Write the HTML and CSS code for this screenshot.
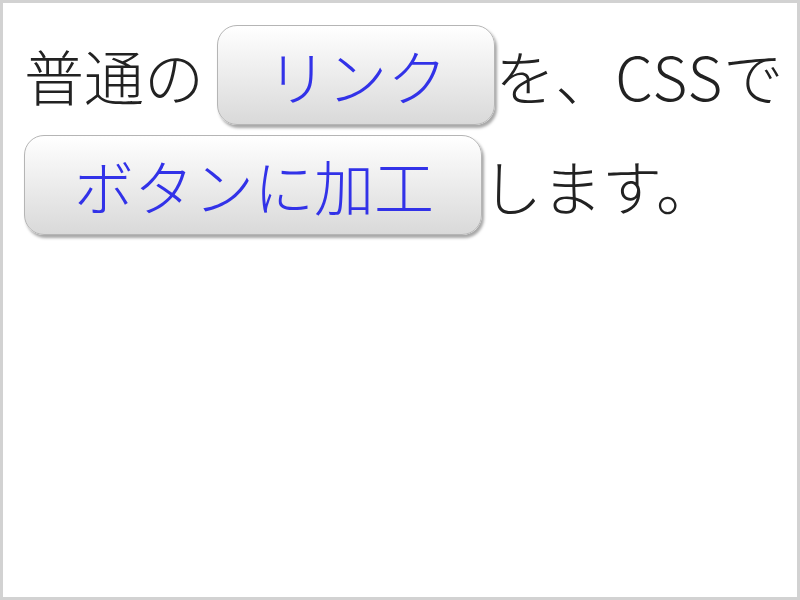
FILE: index.html
```html
<!DOCTYPE html>
<html lang="ja">
<head>
    <meta charset="UTF-8">
    <meta name="viewport" content="width=device-width, initial-scale=1.0">
    <title>リンクをボタンに</title>
    <link rel="stylesheet" href="styles.css">
</head>
<body>

    <div class="frame">
        <p class="sample">普通の <a href="#" class="btn">リンク</a>を、<span class="latin">CSS</span>で<a href="#" class="btn">ボタンに加工</a>します。</p>
    </div>

</body>
</html>
```

FILE: styles.css
```css
/* Plain page with a light grey frame */
body {
    margin: 0;
    padding: 0;
    background: #fff;
    font-family: "Noto Sans CJK JP", "Noto Sans", sans-serif;
}

.frame {
    box-sizing: border-box;
    width: 800px;
    height: 600px;
    border: 3px solid #d2d2d2;
    padding: 17px 8px 17px 21px;
}

.sample {
    margin: 0;
    font-size: 60px;
    font-weight: 300;
    line-height: 110px;
    color: #222;
}

.latin {
    letter-spacing: 1px;
}

/* Link turned into a rounded, shaded button */
.btn {
    display: inline-block;
    vertical-align: top;
    margin: 5px 0;
    line-height: 1;
    padding: 19px 47px 19px 49px;
    border: 1px solid #b5b5b5;
    border-radius: 20px;
    background: linear-gradient(to bottom, #ffffff, #d9d9d9);
    box-shadow: 2px 3px 3px rgba(0, 0, 0, 0.35);
    color: #3232e8;
    text-decoration: none;
}

.btn:hover {
    background: linear-gradient(to bottom, #d9d9d9, #ffffff);
}
```
